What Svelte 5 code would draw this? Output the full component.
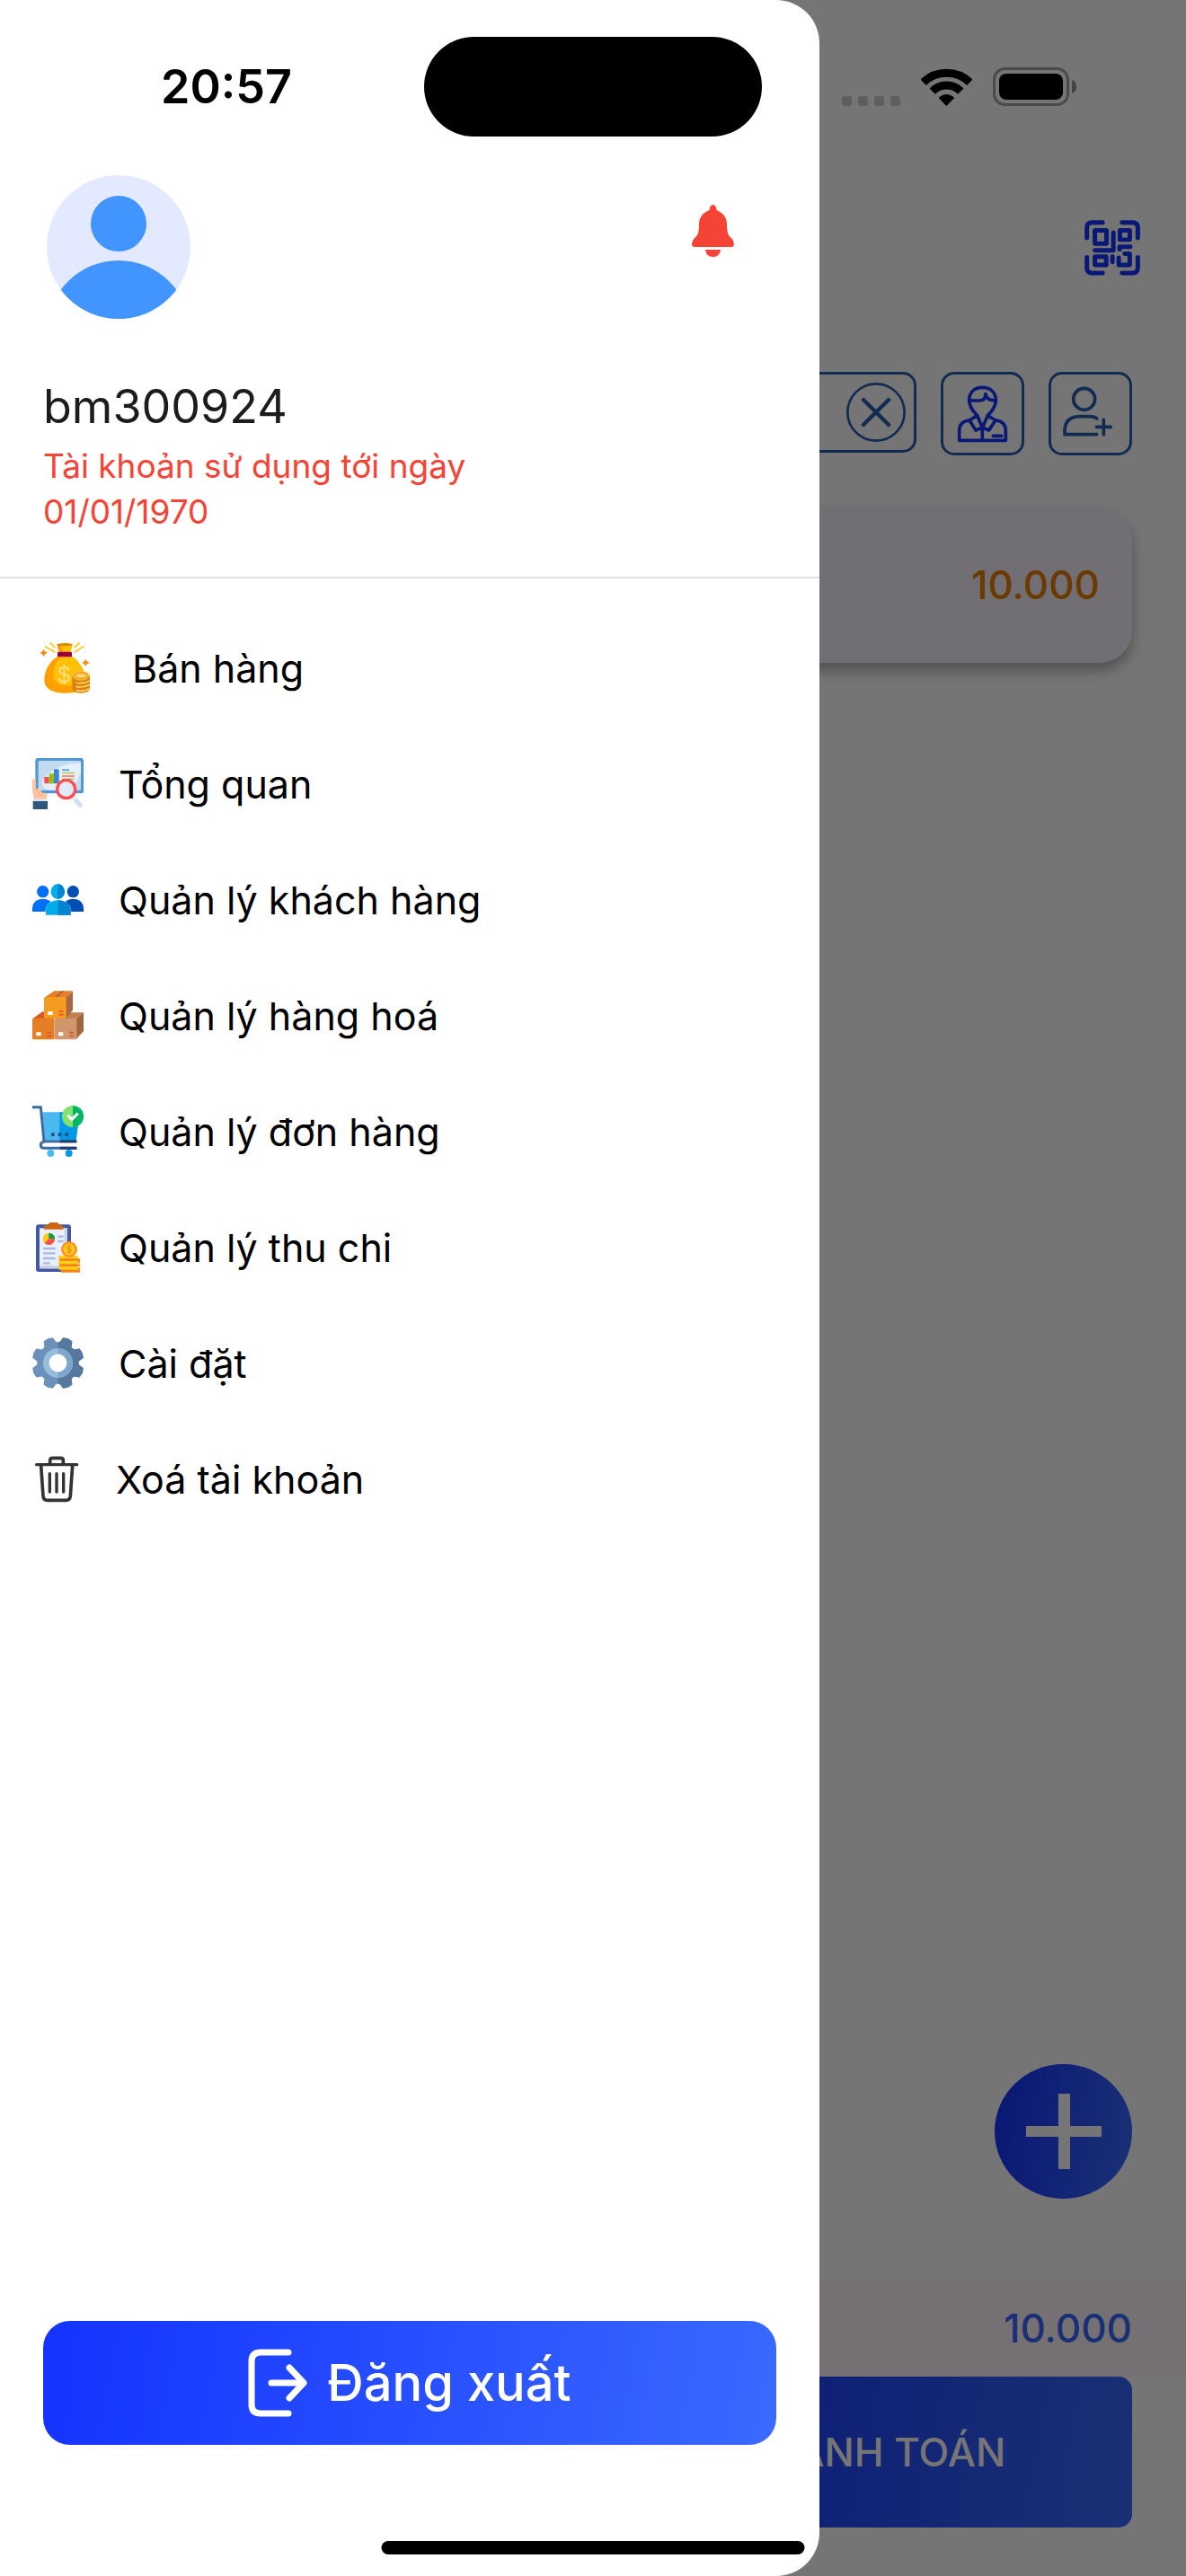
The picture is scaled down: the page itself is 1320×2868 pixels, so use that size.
<script lang="ts">
  type Item = { icon: string; label: string };

  const items: Item[] = [
    { icon: 'sales', label: 'Bán hàng' },
    { icon: 'overview', label: 'Tổng quan' },
    { icon: 'customers', label: 'Quản lý khách hàng' },
    { icon: 'goods', label: 'Quản lý hàng hoá' },
    { icon: 'orders', label: 'Quản lý đơn hàng' },
    { icon: 'finance', label: 'Quản lý thu chi' },
    { icon: 'settings', label: 'Cài đặt' },
    { icon: 'delete', label: 'Xoá tài khoản' }
  ];

  // Outline of an eight-tooth cog centred on the origin
  const cog = (() => {
    const pt = (r: number, deg: number) => {
      const a = (deg * Math.PI) / 180;
      return `${(r * Math.sin(a)).toFixed(1)} ${(-r * Math.cos(a)).toFixed(1)}`;
    };
    let points: string[] = [];
    for (let k = 0; k < 8; k++) {
      const c = 22.5 + 45 * k;
      points.push(pt(70, c - 18), pt(87, c - 11), pt(89, c), pt(87, c + 11), pt(70, c + 18));
    }
    return `M${points.join('L')}Z`;
  })();
</script>

{#snippet icon(name: string)}
  {#if name === 'sales'}
    <svg class="icon" viewBox="72 75 171 171" aria-hidden="true">
      <path d="M107 77l17 17M90 89l34 20M206 77l-18 17M221 88l-33 21" stroke="#ffc60b" stroke-width="5" />
      <path d="M86 97q3 11 13 13q-10 3-13 14q-3-11-13-14q10-2 13-13zM226 130q3 11 13 13q-10 3-13 14q-3-11-13-14q10-2 13-13z" fill="#f98b12" />
      <path d="M132 123C103 140 88 172 88 202C88 234 122 245 158 245C202 245 228 233 225 200C222 165 204 137 180 123Z" fill="#ffa000" />
      <path d="M146 123C122 145 118 166 118 186C120 216 150 226 190 216L224 185C218 160 202 136 180 123Z" fill="#ffc107" />
      <path d="M130 82L138 108H175L183 82Z" fill="#ffc107" />
      <path d="M130 82L138 108H150L143 84Z" fill="#ff9800" />
      <ellipse cx="156" cy="83" rx="26" ry="5" fill="#d98a06" />
      <rect x="132" y="107" width="48" height="17" rx="3" fill="#a3003d" />
      <path d="M132 115H180" stroke="#7d0034" stroke-width="3" />
      <text x="155" y="210" text-anchor="middle" font-size="74" fill="#ffe082">$</text>
      <path d="M181 186V232Q184 244 211 245Q237 244 240 232V186Z" fill="#d9820f" />
      <path d="M194 210Q215 216 240 204M194 223Q215 229 240 217M194 236Q215 242 240 230" stroke="#ffd45c" stroke-width="5" fill="none" />
      <ellipse cx="210" cy="187" rx="29" ry="16" fill="#ffb52e" />
      <ellipse cx="210" cy="187" rx="19" ry="9" fill="#ffd66b" stroke="#e08e14" stroke-width="3" />
    </svg>
  {:else if name === 'overview'}
    <svg class="icon" viewBox="48 464 171 171" aria-hidden="true">
      <rect x="58" y="464" width="161" height="118" rx="8" fill="#4f9ad6" />
      <rect x="68" y="473" width="142" height="99" rx="5" fill="#c2dbf1" />
      <path d="M210 479C150 482 95 505 80 548Q84 572 125 572H150Q198 560 210 510Z" fill="#e6f0fa" />
      <rect x="88" y="527" width="16" height="22" fill="#ff4b55" />
      <rect x="104" y="516" width="16" height="33" fill="#91bd18" />
      <rect x="120" y="501" width="17" height="48" fill="#3f87c9" />
      <path d="M147 504h24" stroke="#4f9ad6" stroke-width="5" />
      <path d="M147 514h42M147 534h42" stroke="#a2c93a" stroke-width="4" />
      <path d="M147 524h42" stroke="#ff5a62" stroke-width="4" />
      <path d="M48 538Q56 528 60 538V568Q66 562 74 570L84 582H99L95 602H54L48 572Z" fill="#ffc3a0" />
      <path d="M60 567Q68 575 76 590" stroke="#f0a584" stroke-width="3" fill="none" />
      <rect x="52" y="600" width="44" height="9" fill="#d7e7f6" />
      <rect x="50" y="608" width="49" height="27" fill="#2d5678" />
      <path d="M183 592L207 621" stroke="#cfe1f2" stroke-width="16" stroke-linecap="round" />
      <path d="M181 586L192 600" stroke="#eef5fc" stroke-width="11" />
      <circle cx="161" cy="568" r="30" fill="#e0ebf7" stroke="#ff4b52" stroke-width="10" />
    </svg>
  {:else if name === 'customers'}
    <svg class="icon" viewBox="48 850 171 171" aria-hidden="true">
      <circle cx="83" cy="909" r="20" fill="#0070f9" />
      <path d="M48 976V964Q50 934 83 933Q108 934 112 950V976Z" fill="#0070f9" />
      <circle cx="184" cy="909" r="20" fill="#004fb4" />
      <path d="M219 976V964Q217 934 184 933Q162 934 155 950V976Z" fill="#004fb4" />
      <path d="M93 987V974Q95 940 133 938Q174 940 176 974V987Z" fill="#00acea" stroke="#fff" stroke-width="3" paint-order="stroke" />
      <path d="M133 938Q174 940 176 974V987H133Z" fill="#0083d0" />
      <ellipse cx="133" cy="909" rx="23" ry="25" fill="#00acea" />
      <path d="M133 884A23 25 0 0 1 133 934Z" fill="#0083d0" />
    </svg>
  {:else if name === 'goods'}
    <svg class="icon" viewBox="48 98 171 171" aria-hidden="true">
      <path d="M48 195L82 171H122V195Z" fill="#d75a2a" />
      <rect x="48" y="193" width="74" height="71" rx="5" fill="#e57e25" />
      <path d="M122 195L155 174H218L194 195Z" fill="#c47c50" />
      <path d="M194 195L219 173V236L194 263Z" fill="#a0663f" />
      <rect x="123" y="193" width="73" height="71" rx="5" fill="#cf976b" />
      <path d="M87 125L121 102H183L160 125Z" fill="#e57e25" />
      <path d="M124 123L146 102H154L133 123Z" fill="#a8653a" />
      <path d="M159 125L183 103V166L159 193Z" fill="#a8673f" />
      <rect x="87" y="122" width="74" height="71" rx="5" fill="#f39c1f" />
      <path d="M100 176h16M61 246h16M135 246h16" stroke="#fff" stroke-width="12" />
      <path d="M137 170h14M137 181h14M98 241h14M98 252h14M172 241h14M172 252h14" stroke="#d9552b" stroke-width="5" />
    </svg>
  {:else if name === 'orders'}
    <svg class="icon" viewBox="48 485 171 171" aria-hidden="true">
      <path d="M82 507H201V545L194 600H90Z" fill="#4ab9f0" />
      <path d="M139 507H201V545L194 600H139Z" fill="#0499e6" />
      <path d="M48 490H76L87 604H196M90 605Q76 606 76 616Q76 627 88 627H196" stroke="#3b6ba6" stroke-width="9" fill="none" />
      <path d="M141 604H196M141 627H196" stroke="#213f6e" stroke-width="9" />
      <path d="M111 576h11v11h-11zM134 576h11v11h-11zM157 576h11v11h-11z" fill="#274c86" />
      <circle cx="109" cy="644" r="12" fill="#4ab9f0" />
      <circle cx="170" cy="644" r="12" fill="#0499e6" />
      <circle cx="183" cy="521" r="36" fill="#82e26e" />
      <path d="M183 485A36 36 0 0 1 183 557Z" fill="#00b566" />
      <path d="M166 517L180 531L200 511" stroke="#fff" stroke-width="9" fill="none" />
    </svg>
  {:else if name === 'finance'}
    <svg class="icon" viewBox="48 871 171 171" aria-hidden="true">
      <rect x="60" y="881" width="117" height="158" rx="9" fill="#4457a5" />
      <rect x="72" y="893" width="93" height="135" fill="#e9f0f9" />
      <path d="M155 893H165V1028H72V1018H155Z" fill="#c9d3e0" />
      <path d="M87 897V888Q87 884 92 884H101Q102 874 110 874H128Q136 874 137 884H145Q151 884 151 890V897Z" fill="#d0650f" />
      <circle cx="103" cy="929" r="20" fill="#ffc914" />
      <path d="M103 929V909A20 20 0 0 1 123 929Z" fill="#069b4f" />
      <path d="M103 929H123A20 20 0 0 1 89 943Z" fill="#ff4c4c" />
      <path d="M84 961h41M84 977h41M84 994h41M84 1010h24M133 921h19M133 937h19" stroke="#a9b8e2" stroke-width="7" />
      <path d="M137 985H200V998H207V1011H200V1024H207V1041H144V1029H137Z" fill="#ff9a1e" />
      <path d="M137 990H200M137 1008H200M137 1027H200" stroke="#ffd21a" stroke-width="10" />
      <path d="M144 998H207M144 1017H207M144 1036H207" stroke="#f98218" stroke-width="7" />
      <circle cx="171" cy="964" r="27" fill="#ff9420" />
      <circle cx="171" cy="964" r="19" fill="#ffcb1a" />
      <text x="171" y="975" text-anchor="middle" font-size="30" fill="#f07a12">$</text>
    </svg>
  {:else if name === 'settings'}
    <svg class="icon" viewBox="-86 -86 172 172" aria-hidden="true">
      <defs>
        <clipPath id="right-half"><rect x="0" y="-90" width="90" height="180" /></clipPath>
      </defs>
      <path d={cog} fill="#6b90b9" />
      <path d={cog} fill="#56789f" clip-path="url(#right-half)" />
      <circle r="50" fill="#96bdda" />
      <path d="M0-50A50 50 0 0 1 0 50Z" fill="#7ea5ca" />
      <circle r="30" fill="#fff" />
    </svg>
  {:else}
    <svg class="icon trash" viewBox="48 510 162 162" fill="none" stroke="#333" stroke-linecap="round" aria-hidden="true">
      <path d="M62 542H197" stroke-width="10" />
      <path d="M107 540V528Q107 520 115 520H143Q151 520 151 528V540" stroke-width="11" />
      <path d="M77 546L84 647Q86 661 98 661H160Q173 661 175 647L182 546" stroke-width="11" />
      <path d="M106 572V633M129 572V633M152 572V633" stroke-width="10" />
    </svg>
  {/if}
{/snippet}

<div class="page">
  <main class="screen">
    <div class="appbar">
      <button class="plain" aria-label="QR">
        <svg class="qr" viewBox="1101 735 187 187" fill="none" stroke="#1535ff" stroke-width="15" stroke-linecap="round" stroke-linejoin="round">
          <path d="M1162 743H1127Q1109 743 1109 761V795M1227 743H1262Q1280 743 1280 761V795M1109 860V895Q1109 913 1127 913H1162M1280 860V895Q1280 913 1262 913H1227" />
          <path d="M1136 770H1175V814H1136ZM1220 770H1253V801H1220ZM1136 858H1174V886H1136Z" />
          <path d="M1198 777V837H1136M1219 834V825H1255M1236 848H1253V886H1216V862M1195 858V876" />
        </svg>
      </button>
    </div>

    <div class="tools">
      <div class="search">
        <input type="text" aria-label="Search" />
        <button class="plain" aria-label="Clear">
          <svg class="clear" viewBox="246 138 198 198" fill="none" stroke="#2560ae">
            <circle cx="345" cy="237" r="95" stroke-width="8" />
            <path d="M299 191L391 283M391 191L299 283" stroke-width="13" />
          </svg>
        </button>
      </div>
      <button class="tool" aria-label="Staff">
        <svg viewBox="570 110 261 261" fill="none" stroke="#1535ff" stroke-width="11" stroke-linejoin="round" stroke-linecap="round">
          <path d="M683 247C668 232 656 216 656 196C656 168 675 153 700 153C725 153 745 168 745 196C745 216 733 232 718 247" />
          <path d="M657 197H690Q710 197 711 175Q713 197 744 197" />
          <path d="M683 247L700 287L718 247M683 247L657 263L678 296L700 287L722 296L744 263L718 247" />
          <path d="M655 263Q623 267 623 298V330H778V298Q778 267 746 263M700 287V330" />
          <path d="M736 315H764" />
        </svg>
      </button>
      <button class="tool" aria-label="Add customer">
        <svg viewBox="930 110 261 261" fill="none" stroke="#2560ae" stroke-width="11" stroke-linejoin="round" stroke-linecap="round">
          <circle cx="1040" cy="192" r="36" />
          <path d="M1082 257Q1074 250 1057 250H1023Q975 252 975 299V310H1082M1081 285H1129M1105 261V310" />
        </svg>
      </button>
    </div>

    <article class="card">
      <span class="price">10.000</span>
    </article>

    <button class="fab" aria-label="Add">
      <svg viewBox="0 0 84 84" fill="#fff"><path d="M0 36H36V0H49V36H84V48H49V84H36V48H0Z" /></svg>
    </button>

    <div class="total">10.000</div>
    <div class="checkout">
      <button class="pay">THANH TOÁN</button>
    </div>
  </main>

  <div class="scrim"></div>

  <aside class="drawer">
    <header>
      <div class="profile">
        <svg class="avatar" viewBox="0 0 160 160" aria-hidden="true">
          <defs><clipPath id="disc"><circle cx="80" cy="80" r="80" /></clipPath></defs>
          <circle cx="80" cy="80" r="80" fill="#e3eaff" />
          <circle cx="80" cy="54" r="31" fill="#4294ff" />
          <circle cx="80" cy="175" r="80" fill="#4294ff" clip-path="url(#disc)" />
        </svg>
        <button class="plain bell" aria-label="Notifications">
          <svg viewBox="769 228 49 58" fill="#f54335">
            <path d="M793.500 228Q797 228 797.500 234C805 237 809 242 809 250C809 260 811 263 814 265Q817 268 817 272Q817 275 814 275H773Q770 275 770 272Q770 268 773 265C776 263 778 260 778 250C778 242 782 237 789.500 234Q790 228 793.500 228Z" />
            <path d="M785 278H802Q801 286 793.500 286Q786 286 785 278Z" />
          </svg>
        </button>
      </div>
      <h1>bm300924</h1>
      <p class="expiry">Tài khoản sử dụng tới ngày 01/01/1970</p>
    </header>

    <nav>
      {#each items as item (item.icon)}
        <a href="#{item.icon}" class:featured={item.icon === 'sales'}>
          {@render icon(item.icon)}
          <span>{item.label}</span>
        </a>
      {/each}
    </nav>

    <button class="logout">
      <svg viewBox="0 0 67 76" fill="none" stroke="#fff" stroke-width="7" stroke-linecap="round" stroke-linejoin="round" aria-hidden="true">
        <path d="M45 4H14Q4 4 4 14V62Q4 72 14 72H45M26 38H62M46 21L62 38L46 55" />
      </svg>
      <span>Đăng xuất</span>
    </button>
  </aside>

  <div class="status">
    <time>20:57</time>
    <div class="island"></div>
    <div class="signals">
      <svg class="dots" viewBox="0 0 65 11" fill="#5e5e5e" aria-hidden="true">
        <rect width="11" height="11" rx="3" /><rect x="18" width="11" height="11" rx="3" /><rect x="36" width="11" height="11" rx="3" /><rect x="54" width="11" height="11" rx="3" />
      </svg>
      <svg class="wifi" viewBox="555 225 171 126" fill="none" stroke="#000" stroke-width="27" aria-hidden="true">
        <path d="M563 272A112 112 0 0 1 718 272M593 302A67 67 0 0 1 688 302" />
        <path d="M614 324Q640 300 667 324L640 351Z" fill="#000" stroke="none" />
      </svg>
      <svg class="battery" viewBox="0 0 93 43" aria-hidden="true">
        <rect x="1.500" y="1.500" width="82" height="40" rx="12" fill="none" stroke="#4a4a4a" stroke-width="3" />
        <rect x="7" y="7" width="71" height="29" rx="8" fill="#000" />
        <path d="M88 14Q93 16 93 21.500Q93 27 88 29Z" fill="#444" />
      </svg>
    </div>
  </div>
  <div class="home"></div>
</div>

<style>
  :global(body) {
    margin: 0;
  }

  .page {
    position: relative;
    min-height: 100vh;
    display: flex;
    flex-direction: column;
    overflow: hidden;
    font-family: Inter, 'Liberation Sans', sans-serif;
    font-size: 43px;
    line-height: 54px;
    color: #000;
    background: #fff;
  }

  button {
    font: inherit;
    margin: 0;
    padding: 0;
    border: 0;
    cursor: pointer;
  }

  svg {
    display: block;
    flex: none;
  }

  .plain {
    background: none;
    flex: none;
  }

  .screen {
    flex: 1;
    display: flex;
    flex-direction: column;
    padding: 177px 0 54px;
  }

  .appbar {
    height: 198px;
    padding: 0 51px;
    display: flex;
    align-items: center;
    justify-content: flex-end;
  }

  .qr {
    width: 62px;
    height: 62px;
  }

  .tools {
    display: flex;
    align-items: flex-start;
    gap: 27px;
    padding: 39px 60px 57px;
  }

  .search {
    flex: 1;
    box-sizing: border-box;
    height: 90px;
    display: flex;
    align-items: center;
    padding: 0 9px 0 24px;
    border: 3px solid #2560ae;
    border-radius: 15px;
  }

  .search input {
    flex: 1;
    min-width: 0;
    border: 0;
    background: none;
    font: inherit;
  }

  .clear {
    width: 66px;
    height: 66px;
  }

  .tool {
    box-sizing: border-box;
    width: 93px;
    height: 93px;
    border: 3px solid #2560ae;
    border-radius: 15px;
    background: none;
  }

  .card {
    height: 174px;
    margin: 0 60px;
    padding: 0 36px;
    display: flex;
    align-items: center;
    justify-content: flex-end;
    border-radius: 36px;
    background: #f7f2fc;
    box-shadow: 0 9px 15px rgba(0, 0, 0, 0.3);
  }

  .price,
  .total,
  .pay {
    font-size: 44px;
    font-weight: 500;
  }

  .price {
    color: #e97e00;
  }

  .fab {
    align-self: flex-end;
    width: 153px;
    height: 150px;
    margin: auto 60px 90px;
    display: flex;
    align-items: center;
    justify-content: center;
    border-radius: 50%;
    background: linear-gradient(100deg, #1433ff, #3a6aff);
  }

  .fab svg {
    width: 84px;
    height: 84px;
  }

  .total {
    height: 108px;
    padding: 0 60px;
    display: flex;
    align-items: center;
    justify-content: flex-end;
    background: #fff5fa;
    color: #3a6aff;
  }

  .checkout {
    display: flex;
    justify-content: flex-end;
    padding: 0 60px;
  }

  .pay {
    width: 48%;
    height: 168px;
    border-radius: 15px;
    background: linear-gradient(100deg, #1433ff, #3a6aff);
    color: #fff;
  }

  .scrim {
    position: absolute;
    inset: 0;
    background: rgba(0, 0, 0, 0.54);
  }

  .drawer {
    position: absolute;
    top: 0;
    bottom: 0;
    left: 0;
    width: min(912px, 85vw);
    box-sizing: border-box;
    display: flex;
    flex-direction: column;
    padding-bottom: 146px;
    border-radius: 0 48px 48px 0;
    background: #fff;
  }

  header {
    padding: 195px 48px 47px;
    border-bottom: 2px solid #e3e3e3;
  }

  .profile {
    display: flex;
    justify-content: space-between;
    padding: 0 46px 68px 4px;
  }

  .avatar {
    width: 160px;
    height: 160px;
  }

  .bell {
    align-self: flex-start;
    padding-top: 33px;
  }

  .bell svg {
    width: 49px;
    height: 58px;
  }

  h1 {
    margin: 0;
    font-size: 52px;
    line-height: 60px;
    font-weight: 400;
    color: #1c1b20;
  }

  .expiry {
    max-width: 560px;
    margin: 10px 0 0;
    font-size: 37px;
    line-height: 51px;
    color: #f54335;
  }

  nav {
    padding-top: 35px;
  }

  nav a {
    height: 129px;
    padding-left: 36px;
    display: flex;
    align-items: center;
    gap: 39px;
    color: inherit;
    text-decoration: none;
  }

  nav a.featured {
    padding-left: 44px;
    gap: 46px;
  }

  .icon {
    width: 57px;
    height: 57px;
  }

  .icon.trash {
    width: 54px;
    height: 54px;
  }

  .logout {
    height: 138px;
    margin: auto 48px 0;
    display: flex;
    align-items: center;
    justify-content: center;
    gap: 21px;
    border-radius: 30px;
    background: linear-gradient(100deg, #1433ff, #3a6aff);
    color: #fff;
    font-size: 56px;
    font-weight: 500;
  }

  .logout svg {
    width: 67px;
    height: 76px;
  }

  .status {
    position: absolute;
    top: 41px;
    left: 0;
    right: 0;
    display: grid;
    grid-template-columns: 1fr 376px 1fr;
    align-items: center;
  }

  time {
    padding-left: 32px;
    text-align: center;
    font-size: 52px;
    font-weight: 600;
  }

  .island {
    height: 111px;
    border-radius: 56px;
    background: #000;
  }

  .signals {
    display: flex;
    align-items: flex-end;
    justify-content: flex-end;
    gap: 23px;
    padding-right: 122px;
  }

  .dots {
    width: 65px;
    height: 11px;
  }

  .wifi {
    width: 57px;
    height: 42px;
  }

  .battery {
    width: 93px;
    height: 43px;
  }

  .home {
    position: absolute;
    bottom: 24px;
    left: 50%;
    width: 471px;
    height: 15px;
    border-radius: 8px;
    background: #000;
    transform: translateX(-50%);
  }
</style>
